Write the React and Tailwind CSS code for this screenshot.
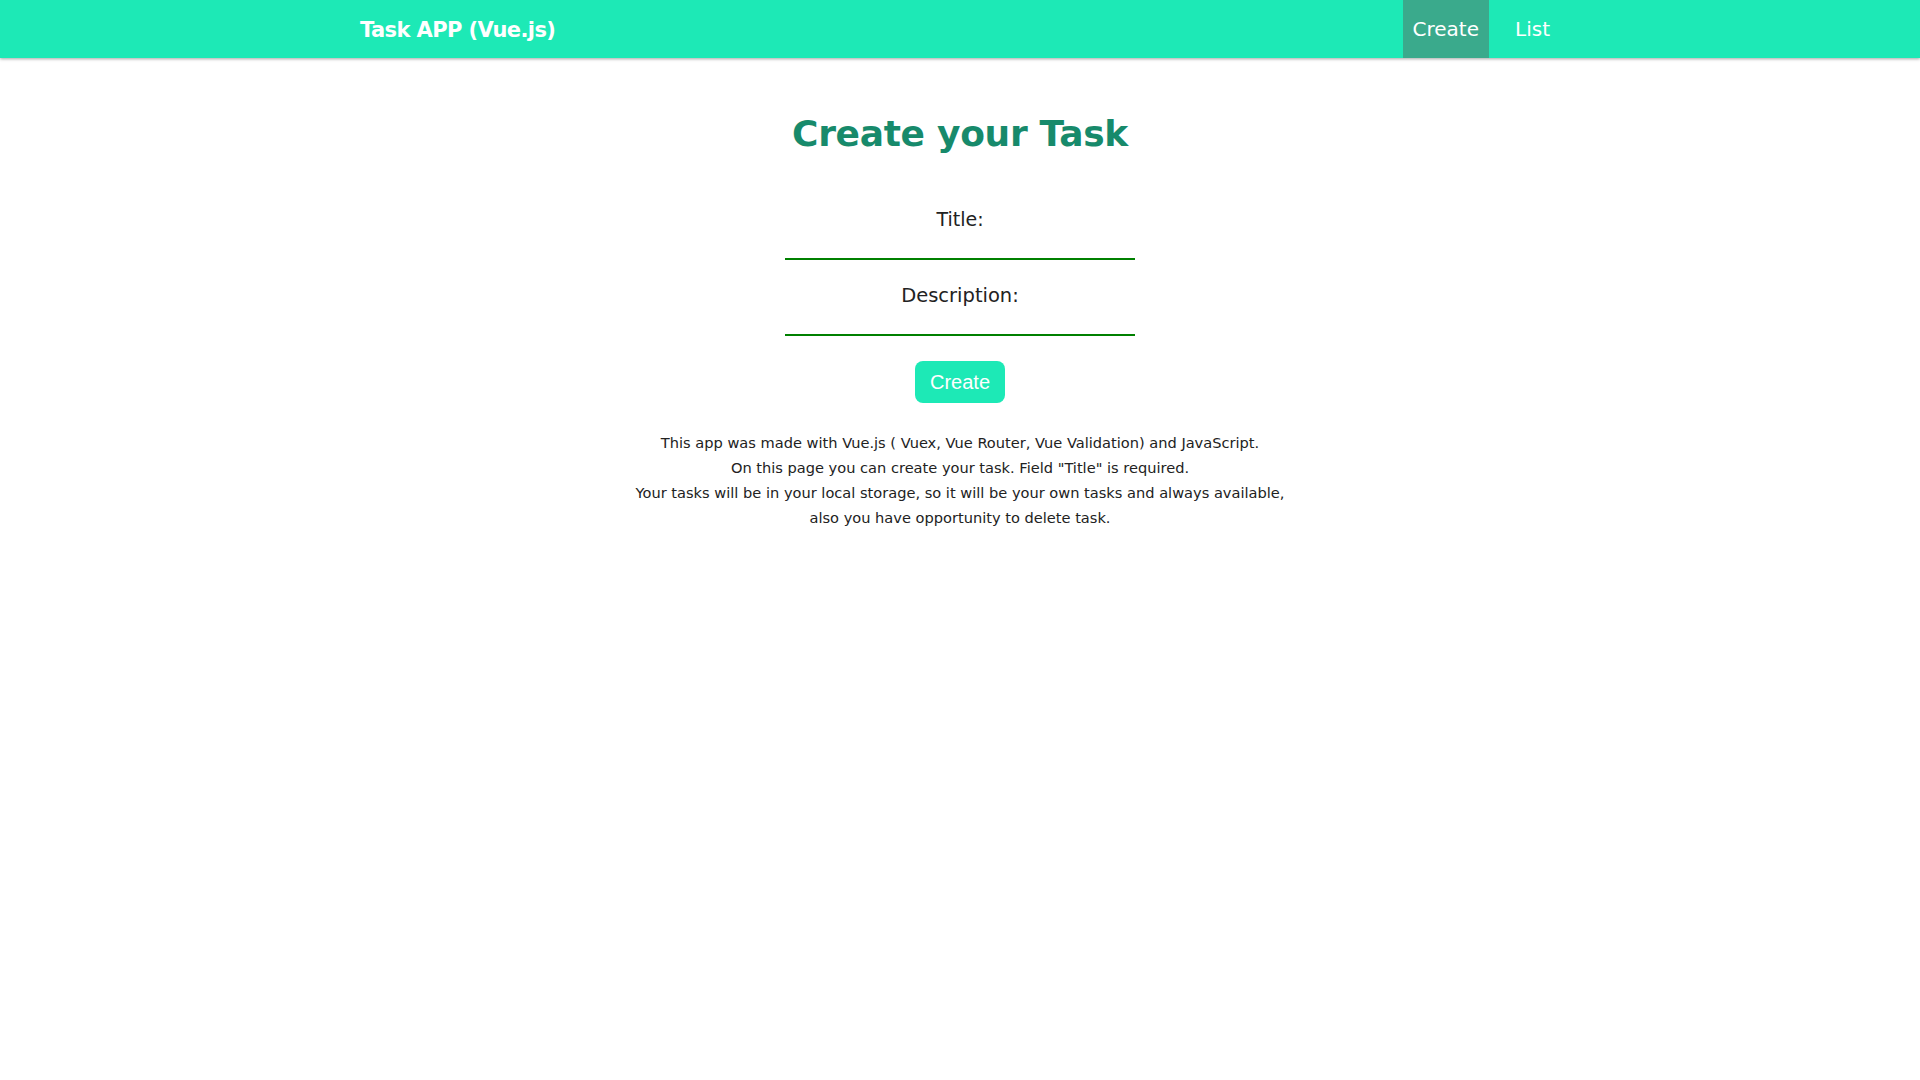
export default function App() {
  const font = { fontFamily: '"DejaVu Sans", "Open Sans", sans-serif' };
  return (
    <div className="min-h-screen bg-white" style={font}>
      <header className="h-[58px] bg-[#1de9b6] shadow-[0_1px_3px_rgba(0,0,0,0.35)]">
        <div className="mx-auto flex h-full w-[1200px] items-center justify-between">
          <div className="pt-[3px] text-[21px] font-bold tracking-[-0.6px] text-white">Task APP (Vue.js)</div>
          <nav className="flex h-full">
            <a className="flex h-full items-center bg-[#3aaa8c] px-[10px] text-[20px] text-white">Create</a>
            <a className="ml-[16px] flex h-full items-center px-[10px] text-[20px] text-white">List</a>
          </nav>
        </div>
      </header>
      <main className="flex flex-col items-center">
        <h1 className="mt-[46px] text-[36px] font-bold leading-[60px] tracking-[-0.3px] text-[#178a6b]">Create your Task</h1>
        <form className="mt-[40px] flex w-[350px] flex-col items-center">
          <label className="text-[19px] leading-[30px] text-[#222]">Title:</label>
          <div className="mt-[24px] h-[2px] w-full bg-[#008000]"></div>
          <label className="mt-[21px] text-[19.5px] leading-[30px] text-[#222]">Description:</label>
          <div className="mt-[23px] h-[2px] w-full bg-[#008000]"></div>
          <button type="button" className="mt-[25px] h-[42px] w-[90px] rounded-[8px] bg-[#1de9b6] text-[20px] text-white" style={{ fontFamily: '"Liberation Sans", Arial, sans-serif' }}>Create</button>
        </form>
        <div className="mt-[27px] text-center text-[14.6px] leading-[25px] text-[#222]">
          <p>This app was made with Vue.js ( Vuex, Vue Router, Vue Validation) and JavaScript.</p>
          <p>On this page you can create your task. Field "Title" is required.</p>
          <p>Your tasks will be in your local storage, so it will be your own tasks and always available,</p>
          <p>also you have opportunity to delete task.</p>
        </div>
      </main>
    </div>
  );
}
